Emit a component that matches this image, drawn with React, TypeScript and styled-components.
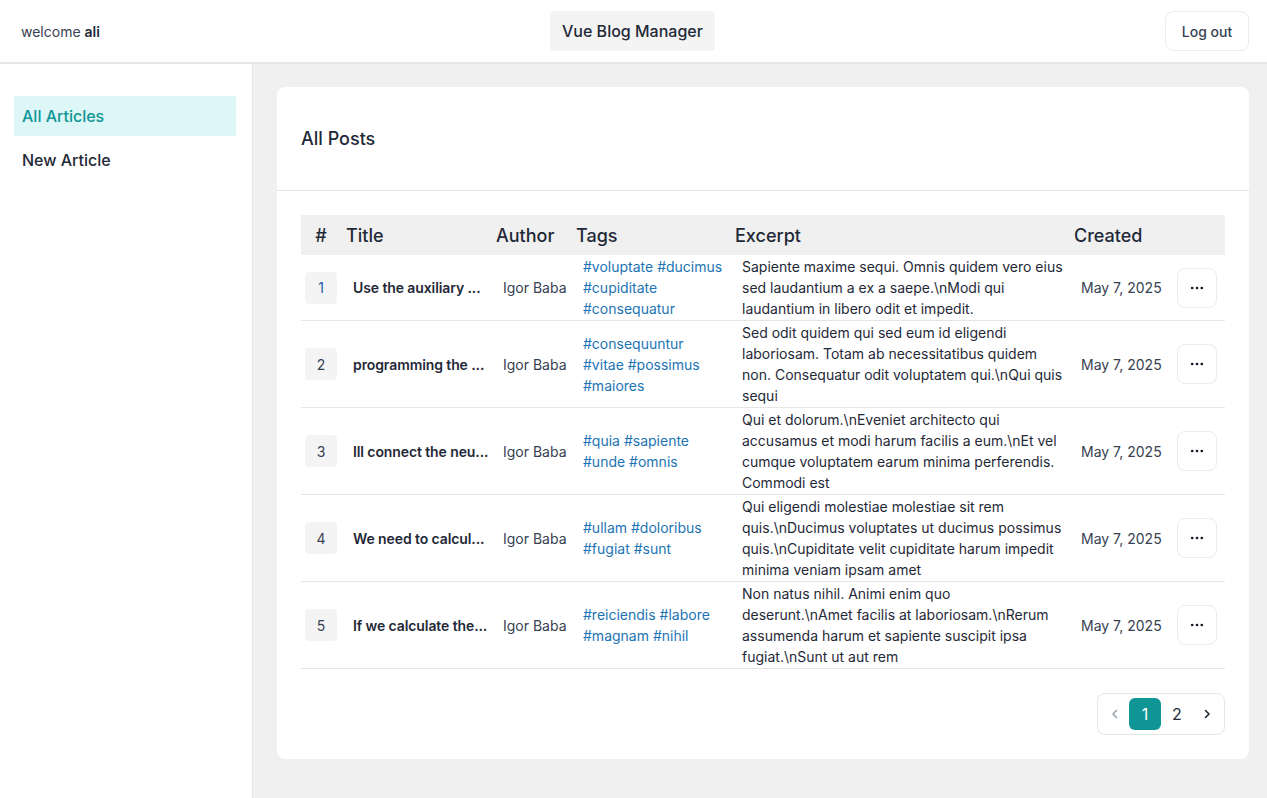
import React from "react";
import styled, { createGlobalStyle } from "styled-components";

const Global = createGlobalStyle`
  html, body { margin: 0; padding: 0; }
  body {
    font-family: Inter, "Noto Sans", "Liberation Sans", sans-serif;
    color: #1f2937;
    background: #ffffff;
    -webkit-font-smoothing: antialiased;
  }
  * { box-sizing: border-box; }
`;

const Page = styled.div`
  display: flex;
  flex-direction: column;
  height: 798px;
  overflow: hidden;
`;

const TopBar = styled.header`
  height: 64px;
  flex: none;
  display: flex;
  justify-content: space-between;
  align-items: center;
  padding: 0 18px 0 21px;
  border-bottom: 2px solid #e6e6e6;
  background: #fff;
`;

const Welcome = styled.div`
  font-size: 14px;
  color: #374151;
  b { font-weight: 600; color: #1f2937; }
`;

const BrandButton = styled.button`
  height: 40px;
  padding: 0 12px;
  border: none;
  border-radius: 4px;
  background: #f4f4f5;
  font-family: inherit;
  font-size: 16px;
  font-weight: 500;
  color: #1f2937;
`;

const OutlineButton = styled.button`
  height: 40px;
  width: 84px;
  padding: 0;
  border: 1px solid #ebebeb;
  border-radius: 8px;
  background: #fff;
  font-family: inherit;
  font-size: 14px;
  font-weight: 500;
  color: #374151;
`;

const Body = styled.div`
  flex: 1;
  display: flex;
  min-height: 0;
`;

const Sidebar = styled.nav`
  width: 253px;
  flex: none;
  background: #fff;
  border-right: 1px solid #e6e6e6;
  padding: 32px 16px 0 14px;
  display: flex;
  flex-direction: column;
  gap: 4px;
`;

const NavItem = styled.a<{ $active?: boolean }>`
  display: flex;
  align-items: center;
  height: 40px;
  padding: 0 8px;
  font-size: 16px;
  font-weight: 500;
  text-decoration: none;
  color: ${(p) => (p.$active ? "#0e9594" : "#1f2937")};
  background: ${(p) => (p.$active ? "#ddf6f7" : "transparent")};
`;

const Main = styled.main`
  flex: 1;
  background: #f0f0f0;
  padding: 23px 18px 24px 24px;
`;

const Card = styled.section`
  background: #fff;
  border-radius: 8px;
`;

const CardHeader = styled.div`
  height: 104px;
  display: flex;
  align-items: center;
  padding: 0 24px;
  border-bottom: 1px solid #e6e6e6;
`;

const CardTitle = styled.h2`
  margin: 0;
  font-size: 18px;
  font-weight: 500;
  color: #1f2937;
`;

const CardBody = styled.div`
  padding: 24px 24px 24px;
  display: flex;
  flex-direction: column;
`;

const Table = styled.table`
  width: 924px;
  border-collapse: collapse;
  table-layout: fixed;
`;

const Th = styled.th<{ $center?: boolean }>`
  height: 40px;
  padding: 0 0 0 ${(p) => (p.$center ? "2px" : "7px")};
  text-align: ${(p) => (p.$center ? "center" : "left")};
  background: #f0f0f0;
  font-size: 18px;
  font-weight: 500;
  color: #1f2937;
`;

const Tr = styled.tr`
  border-bottom: 1px solid #e6e6e6;
`;

const Td = styled.td<{ $center?: boolean; $flush?: boolean }>`
  padding: 1px 0 1px ${(p) => (p.$center ? "2px" : p.$flush ? "8px" : "14px")};
  text-align: ${(p) => (p.$center ? "center" : "left")};
  vertical-align: middle;
  font-size: 14px;
  line-height: 21px;
  color: #1f2937;
`;

const IndexBadge = styled.span<{ $blue?: boolean }>`
  display: inline-flex;
  align-items: center;
  justify-content: center;
  width: 32px;
  height: 32px;
  border-radius: 4px;
  background: #f4f4f5;
  font-size: 14px;
  color: ${(p) => (p.$blue ? "#1d5fa8" : "#374151")};
  vertical-align: middle;
`;

const TitleText = styled.div`
  font-weight: 600;
  white-space: nowrap;
  letter-spacing: -0.1px;
  color: #1f2937;
`;

const Muted = styled.span`
  color: #374151;
  white-space: nowrap;
`;

const Tags = styled.div`
  color: #1c74b4;
  padding-right: 4px;
`;

const Excerpt = styled.div`
  color: #1f2937;
  padding-right: 3px;
`;

const ActionButton = styled.button`
  width: 40px;
  height: 40px;
  display: inline-flex;
  align-items: center;
  justify-content: center;
  border: 1px solid #ebebeb;
  border-radius: 8px;
  background: #fff;
  padding: 0;
  vertical-align: middle;
`;

const Pager = styled.div`
  align-self: flex-end;
  margin-top: 24px;
  display: flex;
  align-items: center;
  padding: 4px 3px;
  border: 1px solid #e6e6e6;
  border-radius: 8px;
`;

const PageItem = styled.button<{ $active?: boolean; $narrow?: boolean }>`
  width: ${(p) => (p.$narrow ? "28px" : "32px")};
  height: 32px;
  display: flex;
  align-items: center;
  justify-content: center;
  border: none;
  border-radius: 6px;
  padding: 0;
  font-family: inherit;
  font-size: 16px;
  background: ${(p) => (p.$active ? "#0e9594" : "transparent")};
  color: ${(p) => (p.$active ? "#fff" : "#1f2937")};
`;

const posts = [
  {
    title: "Use the auxiliary ...",
    tags: "#voluptate #ducimus #cupiditate #consequatur",
    excerpt:
      "Sapiente maxime sequi. Omnis quidem vero eius sed laudantium a ex a saepe.\\nModi qui laudantium in libero odit et impedit.",
  },
  {
    title: "programming the ...",
    tags: "#consequuntur #vitae #possimus #maiores",
    excerpt:
      "Sed odit quidem qui sed eum id eligendi laboriosam. Totam ab necessitatibus quidem non. Consequatur odit voluptatem qui.\\nQui quis sequi",
  },
  {
    title: "Ill connect the neu...",
    tags: "#quia #sapiente #unde #omnis",
    excerpt:
      "Qui et dolorum.\\nEveniet architecto qui accusamus et modi harum facilis a eum.\\nEt vel cumque voluptatem earum minima perferendis. Commodi est",
  },
  {
    title: "We need to calcul...",
    tags: "#ullam #doloribus #fugiat #sunt",
    excerpt:
      "Qui eligendi molestiae molestiae sit rem quis.\\nDucimus voluptates ut ducimus possimus quis.\\nCupiditate velit cupiditate harum impedit minima veniam ipsam amet",
  },
  {
    title: "If we calculate the...",
    tags: "#reiciendis #labore #magnam #nihil",
    excerpt:
      "Non natus nihil. Animi enim quo deserunt.\\nAmet facilis at laboriosam.\\nRerum assumenda harum et sapiente suscipit ipsa fugiat.\\nSunt ut aut rem",
  },
];

const Dots = () => (
  <svg width="16" height="16" viewBox="0 0 16 16" aria-hidden>
    <circle cx="3.2" cy="8" r="1.35" fill="#111827" />
    <circle cx="8" cy="8" r="1.35" fill="#111827" />
    <circle cx="12.8" cy="8" r="1.35" fill="#111827" />
  </svg>
);

const Chevron = ({ dir, color }: { dir: "left" | "right"; color: string }) => (
  <svg width="12" height="12" viewBox="0 0 12 12" aria-hidden>
    <path
      d={dir === "left" ? "M7.5 2.5 L4 6 L7.5 9.5" : "M4.5 2.5 L8 6 L4.5 9.5"}
      fill="none"
      stroke={color}
      strokeWidth="1.6"
      strokeLinecap="round"
      strokeLinejoin="round"
    />
  </svg>
);

export default function App() {
  return (
    <Page>
      <Global />
      <TopBar>
        <Welcome>
          welcome <b>ali</b>
        </Welcome>
        <BrandButton>Vue Blog Manager</BrandButton>
        <OutlineButton>Log out</OutlineButton>
      </TopBar>
      <Body>
        <Sidebar>
          <NavItem $active href="#">
            All Articles
          </NavItem>
          <NavItem href="#">New Article</NavItem>
        </Sidebar>
        <Main>
          <Card>
            <CardHeader>
              <CardTitle>All Posts</CardTitle>
            </CardHeader>
            <CardBody>
              <Table>
                <colgroup>
                  <col style={{ width: 38 }} />
                  <col style={{ width: 150 }} />
                  <col style={{ width: 80 }} />
                  <col style={{ width: 159 }} />
                  <col style={{ width: 339 }} />
                  <col style={{ width: 102 }} />
                  <col style={{ width: 56 }} />
                </colgroup>
                <thead>
                  <tr>
                    <Th $center>#</Th>
                    <Th>Title</Th>
                    <Th>Author</Th>
                    <Th>Tags</Th>
                    <Th>Excerpt</Th>
                    <Th>Created</Th>
                    <Th />
                  </tr>
                </thead>
                <tbody>
                  {posts.map((p, i) => (
                    <Tr key={i}>
                      <Td $center>
                        <IndexBadge $blue={i === 0}>{i + 1}</IndexBadge>
                      </Td>
                      <Td>
                        <TitleText>{p.title}</TitleText>
                      </Td>
                      <Td>
                        <Muted>Igor Baba</Muted>
                      </Td>
                      <Td>
                        <Tags>{p.tags}</Tags>
                      </Td>
                      <Td>
                        <Excerpt>{p.excerpt}</Excerpt>
                      </Td>
                      <Td>
                        <Muted>May 7, 2025</Muted>
                      </Td>
                      <Td $flush>
                        <ActionButton aria-label="actions">
                          <Dots />
                        </ActionButton>
                      </Td>
                    </Tr>
                  ))}
                </tbody>
              </Table>
              <Pager>
                <PageItem $narrow aria-label="previous">
                  <Chevron dir="left" color="#9ca3af" />
                </PageItem>
                <PageItem $active>1</PageItem>
                <PageItem>2</PageItem>
                <PageItem $narrow aria-label="next">
                  <Chevron dir="right" color="#1f2937" />
                </PageItem>
              </Pager>
            </CardBody>
          </Card>
        </Main>
      </Body>
    </Page>
  );
}
